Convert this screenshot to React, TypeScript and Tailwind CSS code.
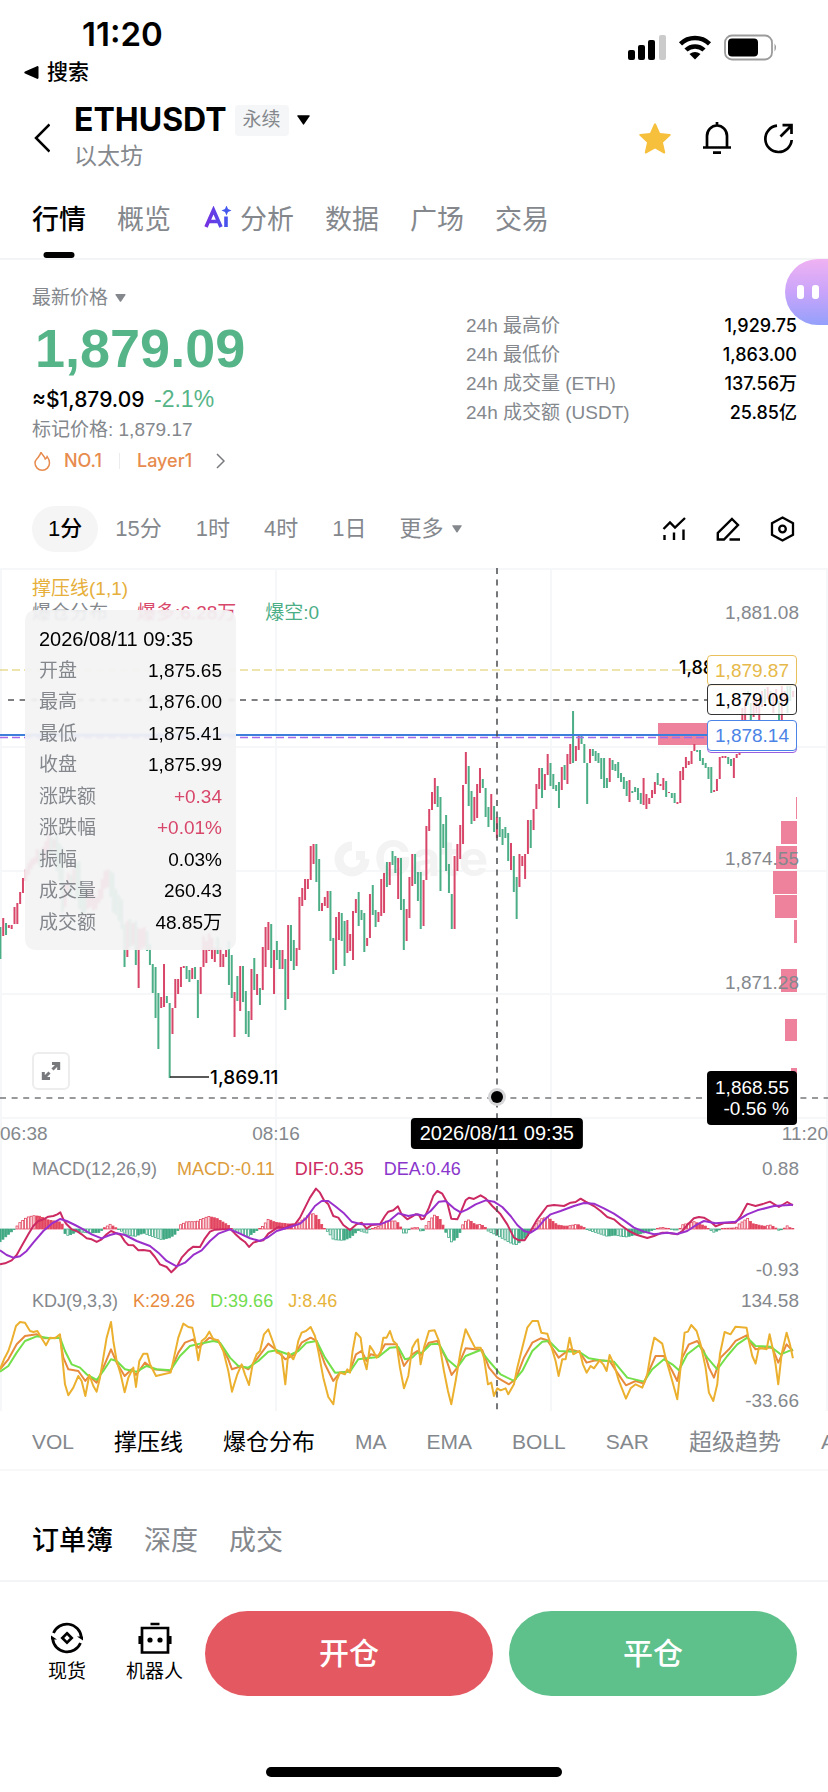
import React, { useState } from 'react'

// one entry per minute: u = up (red), d = down (green), then top-bottom of the bar
const CANDLES = `
d926-958 u917-935 d922-934 u924-927 u924-928 u906-923 u902-923 u891-903 u877-892 u868-880 u862-874 u858-868 u856-864
u848-862 d850-866 u846-860 u840-858 u832-850 d836-854 u838-848 d834-870 d842-880 d846-912 u882-906 u872-890 d874-896
u868-884 d862-898 d860-908 d880-914 d886-912 u890-908 u884-906 u892-910 u896-908 u888-902 u878-898 u870-888 u868-886
d870-896 d872-912 d888-914 d894-920 d898-928 d923-966 u920-956 d918-946 u922-944 d920-964 u927-987 u928-948 u926-946
d930-950 d943-964 d963-992 d966-1017 d992-1048 u996-1007 u963-1006 d995-1002 d1002-1077 u1007-1033 u978-1007 u978-993
u966-986 u965-967 d965-978 d969-981 u967-978 d966-978 d979-1017 u966-993 u935-966 u940-962 u932-950 u937-958 u947-961
d936-953 u947-966 u953-966 u949-956 d940-984 d954-997 u991-1036 d975-1000 u965-1010 d965-1001 d990-1033 d1010-1036
u968-1019 d957-989 u973-994 d987-1004 u946-989 u926-966 u921-949 d923-967 u949-993 d940-959 d949-968 u949-968 d958-1009
u924-998 d924-960 d939-969 u947-965 u896-949 u887-905 u878-899 u878-888 u845-879 u843-863 d843-881 d858-910 u902-910
u896-905 u890-907 d890-940 d937-973 u916-969 u911-939 d912-940 d920-965 u919-952 u933-950 u910-959 u898-912 d891-925
d909-919 d912-951 u937-945 u893-937 d884-914 d909-926 u911-921 u878-915 u872-912 d861-886 u861-884 d850-864 d855-872
u857-898 d857-909 d898-949 u908-940 u876-917 u853-885 d853-883 d871-900 d871-928 u879-925 u825-879 u808-830 u791-809
u777-803 d785-806 d796-890 d823-847 d814-870 d863-892 d893-928 u855-928 u843-870 u824-858 u784-843 u751-783 d765-805
d790-823 u796-820 u783-817 u767-792 d778-787 d787-816 d806-826 u793-819 d805-831 u816-837 d816-836 d828-844 d826-837
d832-860 u842-869 d855-891 d876-918 u853-886 u855-865 u853-878 u819-853 d819-847 u808-829 u783-808 u767-788 d767-797
u773-789 u753-774 d762-785 d773-788 d784-790 d781-807 u766-789 d764-779 u753-783 u743-763 d710-762 u745-760 u735-749
d735-743 d743-762 d762-803 u748-762 d748-755 d750-760 d752-762 d757-778 d757-787 d777-787 u757-781 d759-769 d763-770
d761-777 d772-781 d776-788 d780-795 u779-801 d790-792 d786-791 d787-799 d792-803 u777-804 u793-808 u797-803 u789-797
u781-793 d772-784 u783-785 u777-789 d780-796 u791-792 d792-797 d792-802 u801-803 u770-802 u766-779 u756-767 u760-764
u750-763 u743-750 d749-751 d749-760 d757-764 d762-767 d766-778 d766-792 u789-791 u778-790 u756-778 u755-757 u755-757
d756-763 d758-765 u757-777 u753-757 u747-754 u707-747 u698-722 d690-704 d702-746 u700-716 u696-712 u704-746 u690-706
d688-702 u686-698 d690-700 u692-712 u688-700 d700-746 u684-746 u690-700 d684-712 d684-700 u690-696
`.trim().split(/\s+/).map((c) => {
    const [top, bottom] = c.slice(1).split('-').map(Number)
    return { up: c[0] === 'u', top, bottom }
})

const STEP = 2.821

// indicator series are stored at 3x with the origin at (0, 1150)
const DIF = '0,340 15,337 35,328 50,312 65,285 85,250 100,225 115,210 130,205 145,197 160,195 172,190 181,184 190,205 200,220 215,235 230,240 245,250 260,262 275,265 290,273 305,265 320,250 333,240 350,247 362,252 375,272 385,282 400,283 415,298 430,297 450,300 465,318 480,340 500,348 514,364 530,348 545,320 565,298 580,287 600,288 615,262 630,242 645,236 670,235 692,235 705,248 720,262 735,273 747,288 760,275 775,270 790,268 805,248 820,238 835,228 855,232 870,222 885,220 900,200 915,170 930,140 948,113 960,125 972,148 985,160 1000,195 1015,200 1030,222 1050,237 1070,220 1085,215 1100,233 1115,222 1140,220 1155,195 1165,182 1180,178 1194,166 1205,190 1222,205 1235,198 1247,190 1257,192 1264,205 1272,203 1287,170 1300,135 1312,120 1327,128 1342,155 1354,203 1372,205 1384,180 1397,148 1407,140 1422,144 1442,133 1457,142 1477,165 1502,190 1522,220 1542,260 1557,268 1574,268 1592,240 1612,205 1627,185 1642,165 1662,162 1692,165 1712,155 1727,153 1742,143 1757,152 1782,165 1802,180 1822,198 1842,205 1862,222 1887,240 1912,252 1942,261 1962,255 1987,245 2002,245 2032,250 2047,240 2062,222 2082,202 2097,198 2112,200 2132,212 2147,226 2172,216 2207,215 2222,195 2242,158 2267,165 2292,158 2310,152 2337,168 2362,153 2379,163'
const DEA = '0,298 20,312 40,320 60,316 80,300 100,275 130,240 155,218 181,204 200,210 225,222 250,235 275,250 305,262 330,252 350,247 375,252 410,270 450,285 475,305 500,330 530,346 555,335 580,312 605,298 630,270 655,248 690,235 720,248 750,262 780,270 805,258 830,240 870,228 900,218 920,200 945,165 965,150 985,150 1005,165 1030,185 1055,212 1085,220 1140,220 1170,208 1195,187 1225,195 1252,190 1272,195 1292,180 1317,152 1337,150 1362,172 1382,184 1402,175 1427,160 1457,148 1482,152 1507,168 1532,195 1552,222 1572,240 1592,245 1612,232 1632,208 1652,190 1682,180 1722,165 1752,156 1782,158 1812,172 1842,188 1872,208 1902,230 1932,242 1962,250 2002,245 2032,249 2062,240 2092,220 2112,210 2147,217 2207,212 2242,190 2272,178 2322,165 2379,161'
const J = '0,655 12,625 25,600 35,570 48,525 60,513 75,515 90,540 100,543 112,540 125,562 138,583 150,560 165,562 180,550 185,600 195,700 205,733 220,710 235,675 245,690 256,735 268,672 280,705 290,722 300,680 310,620 320,560 333,513 340,570 350,630 362,670 374,724 385,680 400,650 408,708 418,630 430,608 442,608 450,640 468,675 490,670 512,665 522,620 535,560 550,518 565,528 577,530 585,565 595,628 605,570 617,560 628,542 640,565 655,568 670,600 685,660 696,722 712,670 725,640 735,670 747,702 758,640 770,610 780,600 792,550 805,535 818,570 830,605 845,610 856,700 865,605 880,625 888,605 895,570 905,545 918,540 932,528 945,555 955,600 970,680 985,738 1000,760 1010,690 1020,665 1035,670 1042,655 1050,665 1058,600 1068,545 1082,560 1090,620 1100,655 1110,585 1120,600 1130,620 1142,605 1150,560 1160,560 1170,540 1180,570 1190,580 1200,650 1212,712 1225,675 1237,590 1247,572 1254,565 1262,640 1272,590 1287,540 1304,538 1317,570 1332,660 1344,720 1354,760 1367,690 1382,600 1397,535 1412,565 1425,590 1442,590 1452,620 1464,700 1474,695 1482,735 1492,712 1502,718 1517,712 1525,730 1542,700 1552,650 1567,590 1582,530 1597,510 1614,510 1624,545 1642,548 1652,580 1667,630 1676,675 1687,625 1697,625 1709,560 1720,610 1739,600 1749,640 1760,665 1772,645 1782,652 1799,628 1810,640 1820,660 1829,612 1842,640 1857,690 1878,743 1892,712 1907,700 1927,710 1942,670 1952,610 1963,560 1987,578 1997,620 2017,690 2032,745 2042,650 2054,545 2064,542 2074,522 2090,540 2102,580 2117,650 2127,725 2140,750 2152,700 2160,610 2174,543 2192,550 2207,527 2240,530 2247,570 2257,615 2267,638 2277,590 2300,595 2309,550 2320,600 2327,640 2335,700 2345,610 2360,545 2370,580 2379,622'
const K = '0,655 25,625 50,580 75,555 110,550 135,562 180,560 190,620 205,655 235,660 256,690 268,675 290,695 310,650 333,595 350,635 374,675 395,655 408,672 435,635 460,655 512,660 535,605 555,575 580,565 595,590 628,560 655,570 685,625 696,655 725,645 745,655 770,625 805,578 830,598 856,625 885,610 905,575 932,560 950,570 975,640 1000,690 1020,665 1050,660 1068,610 1085,600 1100,630 1112,610 1135,615 1155,580 1190,580 1212,645 1237,610 1252,600 1262,612 1287,575 1312,570 1337,620 1355,672 1372,650 1397,592 1447,597 1467,650 1492,680 1527,700 1547,685 1572,620 1597,575 1622,562 1642,568 1676,620 1709,595 1739,603 1760,635 1787,628 1829,630 1852,665 1878,703 1907,690 1932,698 1947,660 1967,615 1992,615 2017,660 2032,690 2047,620 2067,580 2092,570 2112,600 2127,650 2142,680 2162,620 2187,595 2207,570 2240,553 2252,575 2267,595 2302,590 2317,590 2335,635 2360,580 2379,600'
const D = '0,662 25,645 50,605 75,570 110,556 150,562 180,560 195,600 215,640 240,650 260,670 290,687 310,660 333,625 350,630 375,655 410,662 440,645 470,655 512,658 540,615 570,585 600,578 640,570 660,575 690,620 715,645 745,650 775,630 805,602 830,598 870,612 895,600 920,575 950,570 975,620 1005,665 1050,662 1075,625 1100,622 1135,618 1170,590 1195,588 1215,625 1237,620 1252,605 1267,605 1292,580 1317,578 1342,625 1372,650 1397,615 1442,597 1467,630 1502,670 1542,690 1567,660 1597,600 1627,572 1647,570 1677,600 1739,603 1767,622 1802,628 1842,632 1882,680 1932,692 1957,655 1992,625 2017,640 2037,658 2062,610 2097,583 2122,620 2152,655 2182,615 2212,580 2242,560 2267,585 2312,587 2342,610 2379,595'

// x,height control points of the MACD histogram
const HIST = '0,-38 15,-25 40,-3 50,8 60,20 80,35 100,40 120,38 140,28 185,20 192,-12 205,-20 230,-8 270,-12 300,-10 310,2 330,14 350,2 362,-5 380,-18 405,-22 430,-12 450,-20 485,-32 510,-26 530,-12 540,12 560,22 590,22 600,28 625,38 650,32 690,8 697,-6 720,-14 745,-22 770,-5 785,5 805,30 825,20 865,15 890,15 910,30 935,48 950,40 970,4 985,-10 1000,-32 1030,-34 1050,-26 1075,-4 1100,-12 1108,-2 1140,10 1160,24 1190,24 1203,4 1210,-12 1220,-12 1230,2 1242,4 1257,4 1262,-8 1272,-4 1280,15 1302,42 1317,35 1332,5 1339,-15 1355,-40 1372,-25 1384,-2 1390,20 1407,28 1427,12 1442,14 1457,4 1464,-6 1492,-20 1532,-42 1547,-48 1562,-38 1582,-20 1597,-3 1604,12 1622,30 1642,36 1672,12 1697,8 1732,14 1757,2 1764,-3 1792,-12 1822,-22 1842,-18 1877,-24 1922,-14 1957,-4 1967,1 1987,5 2002,1 2022,-3 2037,-3 2045,12 2082,22 2117,8 2130,-3 2142,-10 2157,-3 2172,2 2207,3 2217,15 2242,32 2257,16 2292,8 2312,12 2327,3 2334,-4 2345,-2 2352,2 2362,10 2372,2 2379,1'
    .split(' ').map((p) => p.split(',').map(Number))

function histAt(x: number) {
    for (let i = 1; i < HIST.length; i++) {
        const [x0, v0] = HIST[i - 1]
        const [x1, v1] = HIST[i]
        if (x <= x1) return v0 + ((v1 - v0) * (x - x0)) / (x1 - x0)
    }
    return 0
}

// liquidation levels: left edge, top, bottom
const LIQUIDATIONS = [
    [658, 722, 744], [796, 796, 818], [781, 820, 843], [776, 845, 868], [773, 870, 893],
    [775, 894, 917], [794, 919, 942], [781, 968, 991], [785, 1018, 1040], [791, 1067, 1089],
]

const UP = '#d8476a'
const DOWN = '#4cae86'

function Series({ points, color }: { points: string, color: string }) {
    return <polyline points={points} fill="none" stroke={color} strokeWidth="6" strokeLinejoin="round" />
}

function ChartDrawing() {
    return (
        <svg className="absolute inset-0 w-full h-full" viewBox="0 567 828 843" preserveAspectRatio="none" aria-hidden="true">
            <g stroke="#f6f7f8" strokeWidth="2">
                {[568, 746, 870, 993, 1117].map((y) => <line key={y} x1="0" x2="828" y1={y} y2={y} />)}
                {[1, 276, 551, 827].map((x) => <line key={x} x1={x} x2={x} y1="567" y2="1410" />)}
            </g>

            <g fill="none" stroke="#f3f3f4" strokeWidth="9">
                <path d="M352 845a13 13 0 1 0 13 13" />
            </g>
            <path d="M356 850h9v9h-9z" fill="#f3f3f4" />
            <text x="374" y="875" fontSize="50" fontWeight="700" fill="#f3f3f4" fontFamily="Inter, sans-serif">Gate</text>

            <g fill="#ee819b">
                {LIQUIDATIONS.map(([x, top, bottom]) => <rect key={top} x={x} y={top} width={797 - x} height={bottom - top} />)}
            </g>

            {CANDLES.map((c, i) => (
                <rect key={i} x={i * STEP - 0.6} y={c.top} width="2" height={c.bottom - c.top} fill={c.up ? UP : DOWN} />
            ))}

            <line x1="0" x2="707" y1="669" y2="669" stroke="#dccb5c" strokeDasharray="8 4" />
            <line x1="8" x2="707" y1="699" y2="699" stroke="#55565a" strokeWidth="1.5" strokeDasharray="6 5.6" />
            <line x1="0" x2="707" y1="736.5" y2="736.5" stroke="#a66be8" strokeWidth="1.5" strokeDasharray="8 4" />
            <line x1="0" x2="707" y1="734" y2="734" stroke="#3f7fdc" strokeWidth="2" />

            <path d="M170 1076h39" stroke="#222" strokeWidth="1.5" />

            {CANDLES.map((_, i) => {
                const v = histAt(i * STEP * 3) / 3
                const prev = histAt((i - 1) * STEP * 3) / 3
                const h = Math.max(Math.abs(v), 0.6)
                const color = v > 0 ? '#e2455f' : '#3fa883'
                const shrinking = Math.abs(v) < Math.abs(prev)
                return (
                    <rect key={i} x={i * STEP - 0.9} y={v > 0 ? 1228 - h : 1228} width="2" height={h}
                        fill={shrinking ? color : 'white'} stroke={color} strokeWidth="0.8" />
                )
            })}

            <g transform="translate(0 1150) scale(0.3333)">
                <Series points={DIF} color="#cc2a62" />
                <Series points={DEA} color="#9a30cc" />
                <Series points={K} color="#e78a3c" />
                <Series points={D} color="#73e04a" />
                <Series points={J} color="#ecb02f" />
            </g>

            <line x1="497" x2="497" y1="567" y2="1410" stroke="#4a4b4e" strokeWidth="1.5" strokeDasharray="6 5.6" />
            <line x1="0" x2="828" y1="1097" y2="1097" stroke="#77787b" strokeWidth="1.5" strokeDasharray="6 5.6" />
            <circle cx="497" cy="1096" r="9" fill="#d6d6d8" />
            <circle cx="497" cy="1096" r="6" fill="#000" />
        </svg>
    )
}

const tooltipRows = [
    { label: '开盘', value: '1,875.65' },
    { label: '最高', value: '1,876.00' },
    { label: '最低', value: '1,875.41' },
    { label: '收盘', value: '1,875.99' },
    { label: '涨跌额', value: '+0.34', up: true },
    { label: '涨跌幅', value: '+0.01%', up: true },
    { label: '振幅', value: '0.03%' },
    { label: '成交量', value: '260.43' },
    { label: '成交额', value: '48.85万' },
]

const stats = [
    { label: '24h 最高价', value: '1,929.75' },
    { label: '24h 最低价', value: '1,863.00' },
    { label: '24h 成交量 (ETH)', value: '137.56万' },
    { label: '24h 成交额 (USDT)', value: '25.85亿' },
]

const indicators = [
    { name: 'VOL' },
    { name: '撑压线', active: true, cjk: true },
    { name: '爆仓分布', active: true, cjk: true },
    { name: 'MA' },
    { name: 'EMA' },
    { name: 'BOLL' },
    { name: 'SAR' },
    { name: '超级趋势', cjk: true },
    { name: 'AVL' },
]

function Caret({ className }: { className: string }) {
    return (
        <svg className={className} viewBox="0 0 12 9" fill="currentColor" aria-hidden="true">
            <path d="M1 0h10q1.200 0 .6 1L6.700 8.300q-.7 1-1.400 0L.4 1Q-.2 0 1 0z" />
        </svg>
    )
}

function StatusBar() {
    return (
        <div className="h-[94px] pl-6 pr-[50px] flex justify-between items-start">
            <div>
                <div className="pl-[58px] pt-[14px] h-[58px] text-[33px] leading-10 font-semibold font-[Inter,sans-serif]">11:20</div>
                <a href="#search" className="flex items-center gap-2 text-[21px] leading-7 font-medium">
                    <svg className="w-[15px] h-[13px]" viewBox="0 0 15 13" aria-hidden="true"><path d="M1 5.500 13 .2q1.500-.4 1.500 1v10.600q0 1.400-1.500 1L1 7.500q-1.500-1 0-2z" /></svg>
                    搜索
                </a>
            </div>
            <div className="flex items-center gap-3 pt-[34px]">
                <svg className="w-[38px] h-[25px]" viewBox="0 0 38 25" aria-hidden="true">
                    <rect x="0" y="15" width="7" height="10" rx="2" />
                    <rect x="10" y="10" width="7" height="15" rx="2" />
                    <rect x="20" y="5" width="7" height="20" rx="2" />
                    <rect x="31" y="0" width="7" height="25" rx="2" fill="#cbcbcb" />
                </svg>
                <svg className="w-[34px] h-[25px]" viewBox="0 0 34 25" aria-hidden="true">
                    <g fill="none" stroke="#000" strokeWidth="4.500">
                        <path d="M2.500 8.800a21 21 0 0 1 29 0" />
                        <path d="M8 15a13 13 0 0 1 18 0" />
                    </g>
                    <path d="M17 24.500l-5.500-5.600q5.500-4 11 0z" />
                </svg>
                <svg className="w-[54px] h-[27px]" viewBox="0 0 54 27" aria-hidden="true">
                    <rect x="1" y="1.500" width="47" height="24" rx="7" fill="none" stroke="#9b9b9b" strokeWidth="1.800" />
                    <rect x="4" y="4.500" width="30" height="18" rx="4" />
                    <path d="M50.500 9.500q3 4 0 8z" fill="#9b9b9b" />
                </svg>
            </div>
        </div>
    )
}

function Header() {
    return (
        <header className="h-[84px] pl-[34px] pr-[34px] flex items-center justify-between">
            <div className="flex items-center gap-6">
                <button type="button" aria-label="返回" className="pt-1">
                    <svg className="w-4 h-[30px]" viewBox="0 0 16 30" fill="none" stroke="#000" strokeWidth="2.500"><path d="M15.500 1.500 2 15l13.500 13.500" /></svg>
                </button>
                <div>
                    <div className="flex items-center">
                        <h1 className="text-[32px] leading-10 font-bold font-[Inter,sans-serif]">ETHUSDT</h1>
                        <span className="ml-2 px-2 h-[31px] rounded bg-[#f5f6f7] text-[19px] leading-[30px] text-[#84888d]">永续</span>
                        <button type="button" aria-label="切换合约" className="ml-2"><Caret className="w-[13px] h-[10px]" /></button>
                    </div>
                    <div className="text-[23px] leading-8 text-[#84888d]">以太坊</div>
                </div>
            </div>
            <div className="flex items-center gap-[31px] pt-1">
                <button type="button" aria-label="收藏">
                    <svg className="w-8 h-[31px]" viewBox="0 0 32 31" fill="#f6bf3c"><path d="M15 1q1-1.600 2 0l4 9 9.600 1q2 .4.600 1.800l-7.200 6.600 2.200 9.800q.2 1.800-1.400 1.200L16 25.500l-8.800 4.900q-1.600.6-1.400-1.200L8 19.400.8 12.800Q-.6 11.400 1.400 11l9.600-1z" /></svg>
                </button>
                <button type="button" aria-label="提醒">
                    <svg className="w-[30px] h-[34px]" viewBox="0 0 30 34" fill="none" stroke="#000" strokeWidth="2.700">
                        <path d="M5 26.500V15a10 10.500 0 0 1 20 0v11.500M1 26.500h28M15 1v4M11 31.600h8" />
                    </svg>
                </button>
                <button type="button" aria-label="分享">
                    <svg className="w-[31px] h-[31px]" viewBox="0 0 31 31" fill="none" stroke="#000" strokeWidth="2.700">
                        <path d="M14 2.700A13.200 13.200 0 1 0 28.700 17M17.500 13.500 28 3M19.500 2.200h9v8.800" />
                    </svg>
                </button>
            </div>
        </header>
    )
}

function Tab({ name, active, onClick }: { name: string, active: boolean, onClick: () => void }) {
    return (
        <button type="button" onClick={onClick} className={active ? 'relative pt-1 flex items-center font-medium text-black' : 'relative pt-1 flex items-center text-[#84888d]'}>
            {name === '分析' && (
                <svg className="w-[28px] h-6 ml-[2px] mr-2 mb-1" viewBox="0 0 28 24" aria-label="AI">
                    <defs>
                        <linearGradient id="ai" x1="0" x2="28" gradientUnits="userSpaceOnUse"><stop offset="0" stopColor="#7a2fe0" /><stop offset="1" stopColor="#3b5bf0" /></linearGradient>
                    </defs>
                    <path d="M2 21 9.500 4l7.500 17M5 15.500h9M22 10.500V21" fill="none" stroke="url(#ai)" strokeWidth="3.600" />
                    <path d="M22.500-.5 24 3l3.500 1.500L24 6l-1.500 3.500L21 6l-3.500-1.500L21 3z" fill="#4558ee" />
                </svg>
            )}
            {name}
            {active && <span className="absolute bottom-0 left-1/2 -translate-x-1/2 w-[31px] h-[6px] rounded-full bg-black" />}
        </button>
    )
}

function PriceSummary() {
    return (
        <section className="relative flex justify-between pl-8 pr-[31px] pt-6 pb-7">
            <div>
                <button type="button" className="flex items-center gap-[7px] text-[19px] leading-7 text-[#84888d]">
                    最新价格 <Caret className="w-[11px] h-[8px]" />
                </button>
                <div className="pl-[3px] text-[54px] leading-[72px] font-bold text-[#56b588]">1,879.09</div>
                <div className="text-[21px] leading-[30px] font-medium font-[Inter,'Noto_Sans_CJK_SC',sans-serif]">
                    ≈$1,879.09 <span className="ml-1 text-[23px] font-normal font-['Liberation_Sans',sans-serif] text-[#56b588]">-2.1%</span>
                </div>
                <div className="text-[19px] leading-[30px] text-[#84888d]">标记价格: 1,879.17</div>
                <a href="#rank" className="flex items-center text-[18px] leading-8 font-medium font-[Inter,sans-serif] text-[#e78b4e]">
                    <svg className="w-[20px] h-[20px] mr-3" viewBox="0 0 20 20" fill="none" stroke="#e78b4e" strokeWidth="1.500">
                        <path d="M9 1.200c.4 2 3.600 4 4.200 6.800 1-.4 1.600-1.200 2-2.400 1.800 2.400 2.300 4.400 2.300 6.400A7.200 7.200 0 0 1 3 12c0-3 2-4 3.400-6C7.500 4.500 8.500 3 9 1.200z" />
                    </svg>
                    NO.1
                    <span className="mx-[17px] w-px h-4 bg-[#ececee]" />
                    Layer1
                    <svg className="w-[9px] h-[16px] ml-6" viewBox="0 0 9 16" fill="none" stroke="#77797d" strokeWidth="1.500"><path d="M1 1l7 7-7 7" /></svg>
                </a>
            </div>
            <dl className="w-[331px] pt-[27px] text-[19px] leading-[29px]">
                {stats.map((s) => (
                    <div key={s.label} className="flex justify-between">
                        <dt className="text-[#84888d]">{s.label}</dt>
                        <dd className="text-[18px] font-medium font-[Inter,'Noto_Sans_CJK_SC',sans-serif]">{s.value}</dd>
                    </div>
                ))}
            </dl>
            <button type="button" aria-label="智能助手" className="absolute right-0 -top-px w-[43px] h-[66px] rounded-l-full bg-gradient-to-b from-[#f0b2f2] via-[#c9a4fa] to-[#93a0fb]">
                <svg className="w-[43px] h-[66px]" viewBox="0 0 43 66" fill="#fff"><rect x="12" y="26" width="7" height="14" rx="3" /><rect x="27" y="26" width="7" height="14" rx="3" /></svg>
            </button>
        </section>
    )
}

function Chart() {
    return (
        <section className="relative text-[19px] leading-6">
            <ChartDrawing />

            <div className="relative h-[550px] pl-8 pt-[9px]">
                <div className="text-[#e6af3a]">撑压线(1,1)</div>
                <div className="flex gap-[29px] text-[#84888d]">
                    <span>爆仓分布</span>
                    <span className="text-[#d8476a]">爆多:6.28万</span>
                    <span className="text-[#4cae86]">爆空:0</span>
                </div>

                <div className="absolute right-[29px] top-[33px] text-[#84888d]">1,881.08</div>
                <div className="absolute right-[29px] top-[279px] text-[#84888d]">1,874.55</div>
                <div className="absolute right-[29px] top-[403px] text-[#84888d]">1,871.28</div>
                <div className="absolute left-[82%] top-[88px] text-[18px] font-medium font-[Inter,sans-serif]">1,88</div>
                <div className="absolute left-[210px] top-[498px] text-[19px] font-medium font-[Inter,sans-serif]">1,869.11</div>

                <div className="absolute right-[31px] top-[87px] h-[31px] px-[7px] leading-[29px] rounded border border-[#e9c15c] bg-white text-[#e6b94a]">1,879.87</div>
                <div className="absolute right-[31px] top-[116px] h-[31px] px-[7px] leading-[29px] rounded border border-[#333] bg-white/80">1,879.09</div>
                <div className="absolute right-[31px] top-[154px] h-[31px] w-[90px] rounded border border-[#9a5fe0] bg-white" />
                <div className="absolute right-[31px] top-[152px] h-[31px] px-[7px] leading-[29px] rounded border border-[#4b84e6] bg-white text-[#4b84e6]">1,878.14</div>
                <div className="absolute right-[31px] top-[503px] z-10 px-2 py-[6px] rounded bg-black text-white text-right leading-[21px]">1,868.55<br />-0.56 %</div>

                <div className="absolute left-[25px] top-[42px] w-[211px] h-[340px] px-[14px] pt-[17px] pb-[15px] rounded-[10px] bg-[#f3f3f4]/90 backdrop-blur-[1px] flex flex-col justify-between">
                    <div className="text-[20px]">2026/08/11 09:35</div>
                    {tooltipRows.map((r) => (
                        <div key={r.label} className="flex justify-between">
                            <span className="text-[#84888d]">{r.label}</span>
                            <span className={r.up ? 'text-[#d8476a]' : 'text-black'}>{r.value}</span>
                        </div>
                    ))}
                </div>

                <button type="button" aria-label="全屏" className="absolute left-8 bottom-[28px] w-[38px] h-[38px] rounded-md border-2 border-[#ededee] bg-white flex items-center justify-center">
                    <svg className="w-5 h-5" viewBox="0 0 20 20" fill="none" stroke="#77797d" strokeWidth="3">
                        <path d="M11.500 8.500 17 3M8.500 11.500 3 17M11 2.500h6.700V9M9 17.500H2.300V11" />
                    </svg>
                </button>
            </div>

            <div className="relative h-8 flex items-center justify-between text-[#84888d]">
                <span>06:38</span>
                <span className="absolute left-1/3 -translate-x-1/2">08:16</span>
                <span className="absolute left-[60%] top-0 -translate-x-1/2 h-[31px] px-[9px] leading-[31px] text-[20px] rounded bg-black text-white whitespace-nowrap">2026/08/11 09:35</span>
                <span>11:20</span>
            </div>

            <div className="relative h-[132px] pl-8 pr-[29px] pt-[7px] flex justify-between text-[#84888d]">
                <div className="flex gap-5 text-[18px]">
                    <span>MACD(12,26,9)</span>
                    <span className="text-[#dc9c3a]">MACD:-0.11</span>
                    <span className="text-[#cc2a62]">DIF:0.35</span>
                    <span className="text-[#8a35cc]">DEA:0.46</span>
                </div>
                <div className="flex flex-col justify-between text-right"><span>0.88</span><span>-0.93</span></div>
            </div>

            <div className="relative h-[129px] pl-8 pr-[29px] pt-[7px] flex justify-between text-[#84888d]">
                <div className="flex gap-[15px] text-[18px]">
                    <span>KDJ(9,3,3)</span>
                    <span className="text-[#e78a3c]">K:29.26</span>
                    <span className="text-[#73dc50]">D:39.66</span>
                    <span className="text-[#e6b43c]">J:8.46</span>
                </div>
                <div className="pt-[2px] leading-5 flex flex-col justify-between text-right"><span>134.58</span><span>-33.66</span></div>
            </div>
        </section>
    )
}

function BottomBar() {
    return (
        <footer className="border-t-2 border-[#f4f5f6] pt-[29px] pl-12 pr-[31px]">
            <div className="flex items-center">
                <a href="#spot" className="flex flex-col items-center gap-[3px] text-[19px] leading-7">
                    <svg className="w-[34px] h-[34px]" viewBox="0 0 34 34" fill="none" stroke="#000" strokeWidth="2.700">
                        <path d="M3.500 12A14.500 14.500 0 0 1 31.300 16M30.500 22A14.500 14.500 0 0 1 2.700 18" />
                        <path d="M27 15.500h6v4zM7 18.500H1v-4z" fill="#000" stroke="none" />
                        <path d="M17 12.300 21.700 17 17 21.700 12.300 17z" />
                    </svg>
                    现货
                </a>
                <a href="#bot" className="ml-10 flex flex-col items-center gap-[3px] text-[19px] leading-7">
                    <svg className="w-[34px] h-[34px]" viewBox="0 0 34 34" fill="none" stroke="#000" strokeWidth="2.700">
                        <path d="M4 7h26v24.500H4zM12.500 3h9M1.800 15v8M32.200 15v8" />
                        <circle cx="12" cy="19" r="2.600" fill="#000" stroke="none" />
                        <circle cx="22" cy="19" r="2.600" fill="#000" stroke="none" />
                    </svg>
                    机器人
                </a>
                <div className="flex-1 ml-[22px] flex gap-4 text-[30px] font-medium text-white">
                    <button type="button" className="flex-1 h-[85px] rounded-full bg-[#e45862]">开仓</button>
                    <button type="button" className="flex-1 h-[85px] rounded-full bg-[#5ec08b]">平仓</button>
                </div>
            </div>
            <div className="mt-[71px] mb-4 flex justify-center -ml-[17px]">
                <div className="w-[296px] h-[10px] rounded-full bg-black" />
            </div>
        </footer>
    )
}

export default function App() {
    const [tab, setTab] = useState('行情')
    const [period, setPeriod] = useState('1分')
    const [book, setBook] = useState('订单簿')

    return (
        <div className="w-full min-h-screen overflow-x-hidden bg-white text-black font-['Liberation_Sans','Noto_Sans_CJK_SC',sans-serif]">
            <StatusBar />
            <Header />

            <nav className="h-[82px] px-8 flex gap-[31px] text-[27px] border-b-2 border-[#f3f4f5]">
                {['行情', '概览', '分析', '数据', '广场', '交易'].map((name) => (
                    <Tab key={name} name={name} active={tab === name} onClick={() => setTab(name)} />
                ))}
            </nav>

            <PriceSummary />

            <div className="h-[63px] pl-8 pr-[33px] pb-[16px] flex items-center justify-between">
                <div className="flex text-[22px] leading-[46px]">
                    {['1分', '15分', '1时', '4时', '1日'].map((p) => (
                        <button key={p} type="button" onClick={() => setPeriod(p)}
                            className={period === p ? 'px-4 rounded-full bg-[#f5f5f6] font-medium' : 'px-[17px] text-[#84888d]'}>{p}</button>
                    ))}
                    <button type="button" className="px-4 flex items-center gap-2 text-[#84888d]">更多 <Caret className="w-[10px] h-[8px]" /></button>
                </div>
                <div className="flex items-center gap-[30px]">
                    <button type="button" aria-label="指标">
                        <svg className="w-6 h-6" viewBox="0 0 24 24" fill="none" stroke="#000" strokeWidth="2.400">
                            <path d="M1.500 12 8 5.500l5 5L23 1M2.500 18v5M12 15.500V23M21.500 12.500V23" />
                        </svg>
                    </button>
                    <button type="button" aria-label="画线">
                        <svg className="w-6 h-6" viewBox="0 0 24 24" fill="none" stroke="#000" strokeWidth="2.400">
                            <path d="M16 2l6 6L8 22.500H1.800V16zM13.500 22.500H24" />
                        </svg>
                    </button>
                    <button type="button" aria-label="设置">
                        <svg className="w-[25px] h-[26px]" viewBox="0 0 25 26" fill="none" stroke="#000" strokeWidth="2.300">
                            <path d="M12.500 1.500 23 7.200v11.600l-10.500 5.700L2 18.800V7.200z" />
                            <circle cx="12.500" cy="13" r="3.300" />
                        </svg>
                    </button>
                </div>
            </div>

            <Chart />

            <div className="h-[60px] pl-8 pt-1 flex items-center gap-10 overflow-hidden whitespace-nowrap border-b-2 border-[#f8f8f9]">
                {indicators.map((n) => (
                    <button key={n.name} type="button"
                        className={(n.cjk ? 'text-[23px]' : 'text-[21px]') + (n.active ? ' text-black' : ' text-[#84888d]')}>{n.name}</button>
                ))}
            </div>

            <div className="h-[109px] px-8 pt-[31px] flex items-center gap-[31px] text-[27px]">
                {['订单簿', '深度', '成交'].map((name) => (
                    <button key={name} type="button" onClick={() => setBook(name)}
                        className={book === name ? 'font-medium' : 'text-[#84888d]'}>{name}</button>
                ))}
            </div>

            <BottomBar />
        </div>
    )
}
